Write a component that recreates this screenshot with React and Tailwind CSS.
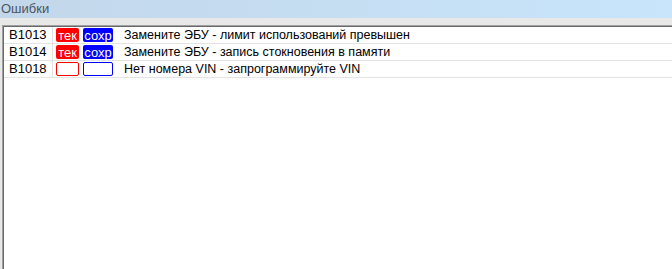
const errors = [
  { code: "B1013", current: true, saved: true, text: "Замените ЭБУ - лимит использований превышен" },
  { code: "B1014", current: true, saved: true, text: "Замените ЭБУ - запись стокновения в памяти" },
  { code: "B1018", current: false, saved: false, text: "Нет номера VIN - запрограммируйте VIN" },
];

function Badge({ on, label, color }) {
  const red = color === "red";
  if (on) {
    return (
      <span
        className={
          "flex h-[14px] items-center justify-center rounded-[2px] text-white leading-none " +
          (red ? "w-[23px] bg-[#ff0000]" : "w-[30px] bg-[#0000ff]")
        }
      >
        {label}
      </span>
    );
  }
  return (
    <span
      className={
        "h-[14px] rounded-[2px] border " +
        (red ? "w-[23px] border-[#ff0000]" : "w-[30px] border-[#0000ff]")
      }
    />
  );
}

export default function App() {
  return (
    <div
      className="flex h-[269px] w-[672px] flex-col overflow-hidden bg-[#e8e8e8] text-[12.5px]"
      style={{ fontFamily: '"Liberation Sans", Arial, sans-serif' }}
    >
      <div className="flex h-[18px] items-center bg-gradient-to-r from-[#c3d7ea] to-[#c8e5fb] pl-[1px] text-[13px] text-[#4b5561]">
        Ошибки
      </div>
      <div className="h-[7px]" />
      <div className="ml-[2px] flex-1 border-l border-t border-[#a0a0a0] bg-white">
        <div className="h-full border-l border-t border-[#696969]">
          {errors.map((e) => (
            <div key={e.code} className="flex h-[17px] border-b border-[#e3e3e3] text-[#000]">
              <div className="flex w-[49px] items-center border-r border-[#e3e3e3] pl-[5px] text-[13px]">{e.code}</div>
              <div className="flex items-center gap-[4px] pl-[3px] text-[13px]">
                <Badge on={e.current} label="тек" color="red" />
                <Badge on={e.saved} label="сохр" color="blue" />
              </div>
              <div className="flex items-center pl-[11px]">{e.text}</div>
            </div>
          ))}
        </div>
      </div>
    </div>
  );
}
